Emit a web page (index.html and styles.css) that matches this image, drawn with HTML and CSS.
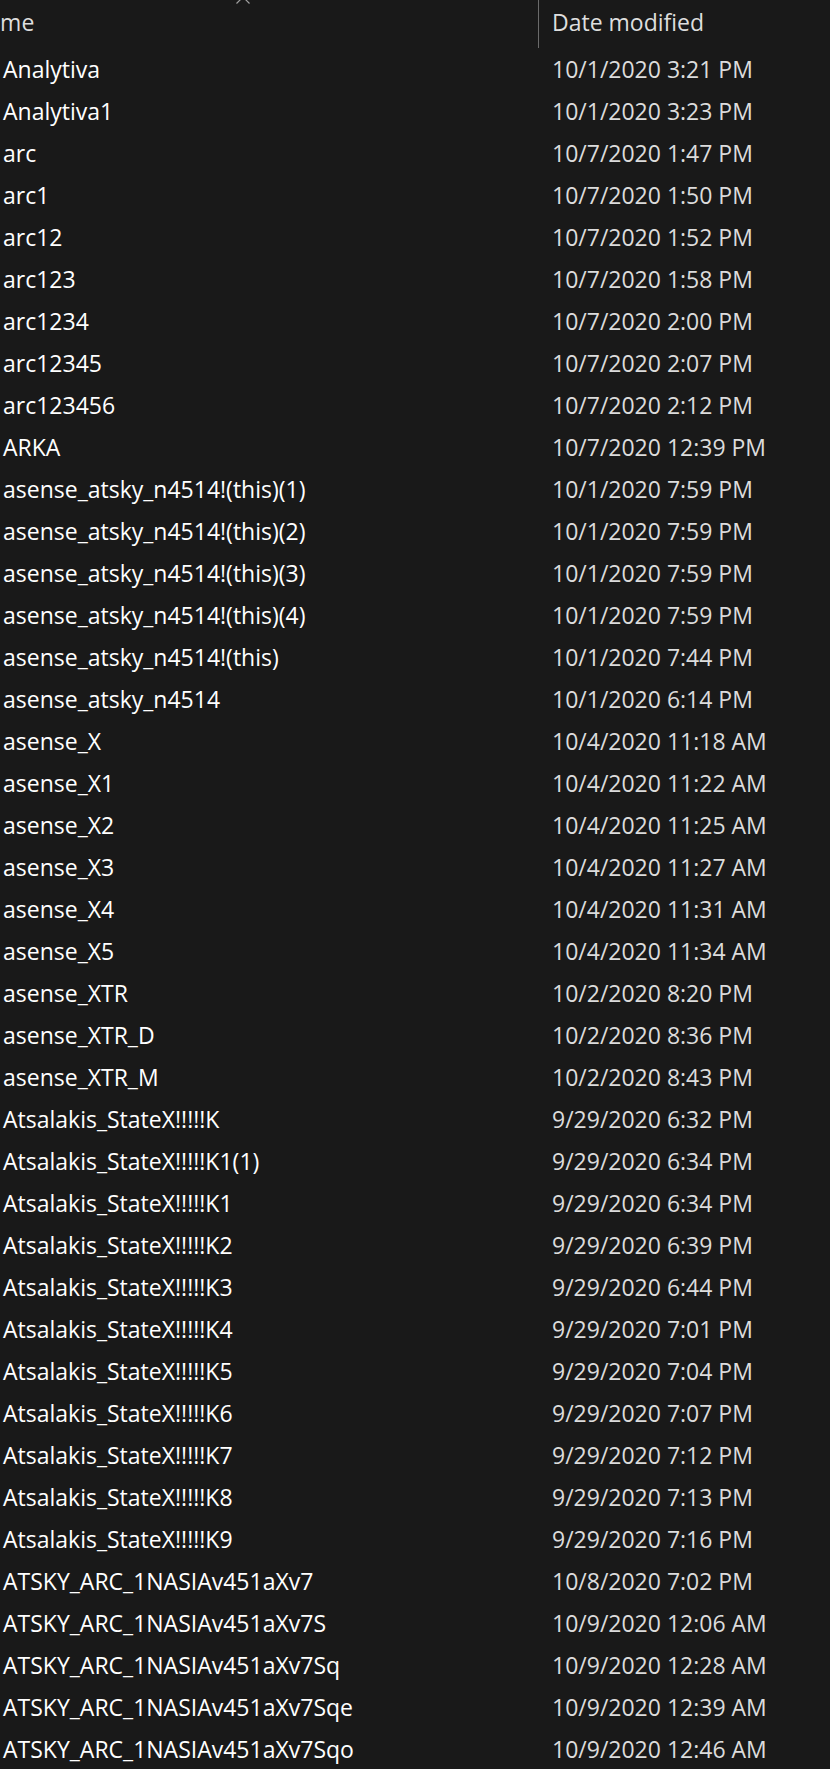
FILE: index.html
```html
<!DOCTYPE html>
<html>
<head>
<meta charset="utf-8">
<link rel="stylesheet" href="styles.css">
</head>
<body>
<div class="list">
  <div class="header">
    <div class="hcell hname"><span class="hlabel">Name</span>
      <svg class="sort" width="16" height="8" viewBox="0 0 16 8"><path d="M1.5 6.5 L8 0 L14.5 6.5" fill="none" stroke="#a0a0a0" stroke-width="1.2"/></svg>
    </div>
    <div class="hcell hdate">Date modified</div>
  </div>
  <div class="row"><div class="name">Analytiva</div><div class="date">10/1/2020 3:21 PM</div></div>
  <div class="row"><div class="name">Analytiva1</div><div class="date">10/1/2020 3:23 PM</div></div>
  <div class="row"><div class="name">arc</div><div class="date">10/7/2020 1:47 PM</div></div>
  <div class="row"><div class="name">arc1</div><div class="date">10/7/2020 1:50 PM</div></div>
  <div class="row"><div class="name">arc12</div><div class="date">10/7/2020 1:52 PM</div></div>
  <div class="row"><div class="name">arc123</div><div class="date">10/7/2020 1:58 PM</div></div>
  <div class="row"><div class="name">arc1234</div><div class="date">10/7/2020 2:00 PM</div></div>
  <div class="row"><div class="name">arc12345</div><div class="date">10/7/2020 2:07 PM</div></div>
  <div class="row"><div class="name">arc123456</div><div class="date">10/7/2020 2:12 PM</div></div>
  <div class="row"><div class="name">ARKA</div><div class="date">10/7/2020 12:39 PM</div></div>
  <div class="row"><div class="name">asense_atsky_n4514!(this)(1)</div><div class="date">10/1/2020 7:59 PM</div></div>
  <div class="row"><div class="name">asense_atsky_n4514!(this)(2)</div><div class="date">10/1/2020 7:59 PM</div></div>
  <div class="row"><div class="name">asense_atsky_n4514!(this)(3)</div><div class="date">10/1/2020 7:59 PM</div></div>
  <div class="row"><div class="name">asense_atsky_n4514!(this)(4)</div><div class="date">10/1/2020 7:59 PM</div></div>
  <div class="row"><div class="name">asense_atsky_n4514!(this)</div><div class="date">10/1/2020 7:44 PM</div></div>
  <div class="row"><div class="name">asense_atsky_n4514</div><div class="date">10/1/2020 6:14 PM</div></div>
  <div class="row"><div class="name">asense_X</div><div class="date">10/4/2020 11:18 AM</div></div>
  <div class="row"><div class="name">asense_X1</div><div class="date">10/4/2020 11:22 AM</div></div>
  <div class="row"><div class="name">asense_X2</div><div class="date">10/4/2020 11:25 AM</div></div>
  <div class="row"><div class="name">asense_X3</div><div class="date">10/4/2020 11:27 AM</div></div>
  <div class="row"><div class="name">asense_X4</div><div class="date">10/4/2020 11:31 AM</div></div>
  <div class="row"><div class="name">asense_X5</div><div class="date">10/4/2020 11:34 AM</div></div>
  <div class="row"><div class="name">asense_XTR</div><div class="date">10/2/2020 8:20 PM</div></div>
  <div class="row"><div class="name">asense_XTR_D</div><div class="date">10/2/2020 8:36 PM</div></div>
  <div class="row"><div class="name">asense_XTR_M</div><div class="date">10/2/2020 8:43 PM</div></div>
  <div class="row"><div class="name">Atsalakis_StateX!!!!!K</div><div class="date">9/29/2020 6:32 PM</div></div>
  <div class="row"><div class="name">Atsalakis_StateX!!!!!K1(1)</div><div class="date">9/29/2020 6:34 PM</div></div>
  <div class="row"><div class="name">Atsalakis_StateX!!!!!K1</div><div class="date">9/29/2020 6:34 PM</div></div>
  <div class="row"><div class="name">Atsalakis_StateX!!!!!K2</div><div class="date">9/29/2020 6:39 PM</div></div>
  <div class="row"><div class="name">Atsalakis_StateX!!!!!K3</div><div class="date">9/29/2020 6:44 PM</div></div>
  <div class="row"><div class="name">Atsalakis_StateX!!!!!K4</div><div class="date">9/29/2020 7:01 PM</div></div>
  <div class="row"><div class="name">Atsalakis_StateX!!!!!K5</div><div class="date">9/29/2020 7:04 PM</div></div>
  <div class="row"><div class="name">Atsalakis_StateX!!!!!K6</div><div class="date">9/29/2020 7:07 PM</div></div>
  <div class="row"><div class="name">Atsalakis_StateX!!!!!K7</div><div class="date">9/29/2020 7:12 PM</div></div>
  <div class="row"><div class="name">Atsalakis_StateX!!!!!K8</div><div class="date">9/29/2020 7:13 PM</div></div>
  <div class="row"><div class="name">Atsalakis_StateX!!!!!K9</div><div class="date">9/29/2020 7:16 PM</div></div>
  <div class="row"><div class="name">ATSKY_ARC_1NASIAv451aXv7</div><div class="date">10/8/2020 7:02 PM</div></div>
  <div class="row"><div class="name">ATSKY_ARC_1NASIAv451aXv7S</div><div class="date">10/9/2020 12:06 AM</div></div>
  <div class="row"><div class="name">ATSKY_ARC_1NASIAv451aXv7Sq</div><div class="date">10/9/2020 12:28 AM</div></div>
  <div class="row"><div class="name">ATSKY_ARC_1NASIAv451aXv7Sqe</div><div class="date">10/9/2020 12:39 AM</div></div>
  <div class="row"><div class="name">ATSKY_ARC_1NASIAv451aXv7Sqo</div><div class="date">10/9/2020 12:46 AM</div></div>
</div>
</body>
</html>
```
FILE: styles.css
```css
html, body {
  margin: 0;
  padding: 0;
  background: #191919;
  overflow: hidden;
}
.list {
  font-family: "Open Sans", "Noto Sans", sans-serif;
  font-size: 23px;
  color: #ffffff;
  width: 830px;
  overflow: hidden;
}
.header {
  display: grid;
  grid-template-columns: 538px 1fr;
  height: 48px;
}
.hcell {
  line-height: 44px;
  color: #dedede;
  white-space: nowrap;
}
.hname {
  position: relative;
}
.hlabel {
  display: inline-block;
  margin-left: -30px;
}
.sort {
  position: absolute;
  left: 235px;
  top: -3px;
}
.hdate {
  border-left: 1px solid #6a6a6a;
  padding-left: 13px;
}
.row {
  display: grid;
  grid-template-columns: 538px 1fr;
  height: 42px;
  line-height: 42px;
  white-space: nowrap;
}
.name {
  padding-left: 3px;
  color: #ffffff;
}
.date {
  padding-left: 14px;
  color: #dcdcdc;
}
```
